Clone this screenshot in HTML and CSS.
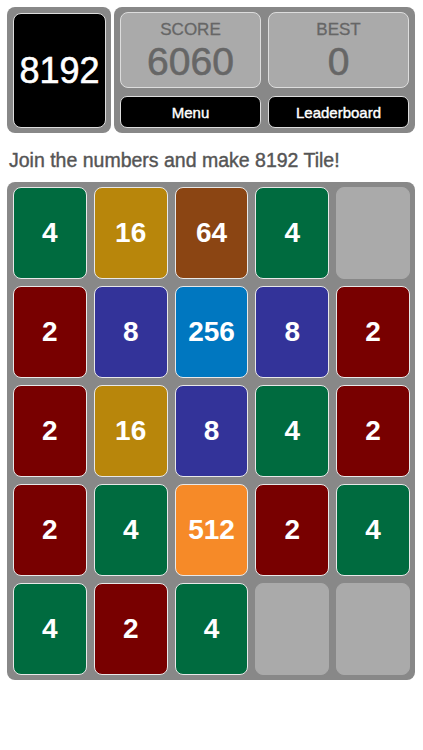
FILE: index.html
```html
<!DOCTYPE html>
<html lang="en">
<head>
    <meta charset="UTF-8">
    <meta name="viewport" content="width=device-width, initial-scale=1.0">
    <title>8192</title>
    <link rel="stylesheet" href="styles.css">
</head>
<body>
    <div class="page">
        <!-- Header: logo tile + score panel -->
        <div class="header">
            <div class="logo-box">
                <div class="logo">8192</div>
            </div>
            <div class="score-panel">
                <div class="score-box">
                    <div class="score-label">SCORE</div>
                    <div class="score-value">6060</div>
                </div>
                <div class="score-box">
                    <div class="score-label">BEST</div>
                    <div class="score-value">0</div>
                </div>
                <button class="panel-btn">Menu</button>
                <button class="panel-btn">Leaderboard</button>
            </div>
        </div>

        <p class="intro">Join the numbers and make 8192 Tile!</p>

        <!-- Game board -->
        <div class="board">
            <div class="tile t4">4</div>
            <div class="tile t16">16</div>
            <div class="tile t64">64</div>
            <div class="tile t4">4</div>
            <div class="tile empty"></div>

            <div class="tile t2">2</div>
            <div class="tile t8">8</div>
            <div class="tile t256">256</div>
            <div class="tile t8">8</div>
            <div class="tile t2">2</div>

            <div class="tile t2">2</div>
            <div class="tile t16">16</div>
            <div class="tile t8">8</div>
            <div class="tile t4">4</div>
            <div class="tile t2">2</div>

            <div class="tile t2">2</div>
            <div class="tile t4">4</div>
            <div class="tile t512">512</div>
            <div class="tile t2">2</div>
            <div class="tile t4">4</div>

            <div class="tile t4">4</div>
            <div class="tile t2">2</div>
            <div class="tile t4">4</div>
            <div class="tile empty"></div>
            <div class="tile empty"></div>
        </div>
    </div>
</body>
</html>
```

FILE: styles.css
```css
/* Reset */
* {
    margin: 0;
    padding: 0;
    box-sizing: border-box;
    font-family: "Liberation Sans", Arial, sans-serif;
}

body {
    background-color: #ffffff;
}

.page {
    padding: 7px 8px 0 7px;
}

/* Header */
.header {
    display: flex;
    gap: 3px;
    height: 126px;
}

.logo-box {
    width: 104px;
    background-color: #888888;
    border-radius: 8px;
    padding: 6px 5px 5px 6px;
}

.logo {
    height: 100%;
    background-color: #000000;
    border: 1px solid #dddddd;
    border-radius: 8px;
    color: #ffffff;
    font-size: 36px;
    -webkit-text-stroke: 0.6px #ffffff; /* medium weight look */
    display: flex;
    justify-content: center;
    align-items: center;
}

.score-panel {
    flex: 1;
    background-color: #888888;
    border-radius: 8px;
    padding: 5px 6px 5px 6px;
    display: grid;
    grid-template-columns: 1fr 1fr;
    grid-template-rows: 76px 32px;
    column-gap: 7px;
    row-gap: 8px;
}

.score-box {
    background-color: #aaaaaa;
    border: 1px solid #dddddd;
    border-radius: 8px;
    color: #666666;
    text-align: center;
    padding-top: 7px;
}

.score-label {
    font-size: 17px;
    line-height: 20px;
    -webkit-text-stroke: 0.3px #666666;
}

.score-value {
    font-size: 39px;
    line-height: 44px;
    -webkit-text-stroke: 0.6px #666666;
}

.panel-btn {
    background-color: #000000;
    border: 1px solid #dddddd;
    border-radius: 7px;
    color: #ffffff;
    font-size: 15px;
    -webkit-text-stroke: 0.4px #ffffff;
    cursor: pointer;
}

/* Intro text */
.intro {
    font-size: 19.5px;
    line-height: 22px;
    color: #555555;
    -webkit-text-stroke: 0.4px #555555;
    margin: 16px 0 11px 2px;
}

/* Board */
.board {
    background-color: #888888;
    border-radius: 8px;
    padding: 5px 5px 5px 6px;
    display: grid;
    grid-template-columns: repeat(5, 1fr);
    grid-auto-rows: 92px;
    gap: 7px;
}

.tile {
    border: 1px solid #e8e8e8;
    border-radius: 8px;
    color: #ffffff;
    font-size: 28px;
    font-weight: bold;
    display: flex;
    justify-content: center;
    align-items: center;
}

.tile.empty {
    background-color: #aaaaaa;
    border-color: #aaaaaa;
}

.t2 { background-color: #780000; }
.t4 { background-color: #006b3f; }
.t8 { background-color: #333399; }
.t16 { background-color: #b8860b; }
.t64 { background-color: #8b4513; }
.t256 { background-color: #0077c0; }
.t512 { background-color: #f68a28; }
```
